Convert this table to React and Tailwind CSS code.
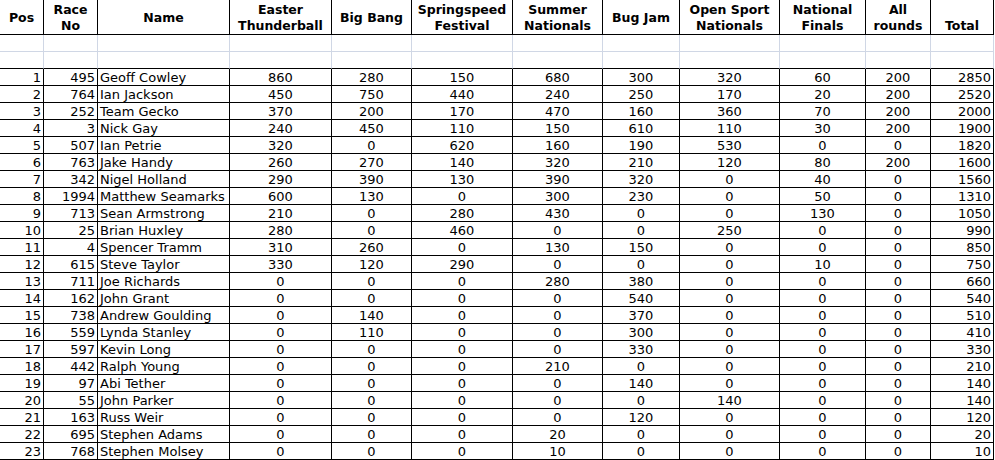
const COLS = 'grid-cols-[44px_54px_132px_102px_80px_101px_90px_77px_100px_86px_65px_63px]';

const HEADERS = [
  { lines: ['Pos'] },
  { lines: ['Race', 'No'] },
  { lines: ['Name'] },
  { lines: ['Easter', 'Thunderball'] },
  { lines: ['Big Bang'] },
  { lines: ['Springspeed', 'Festival'] },
  { lines: ['Summer', 'Nationals'] },
  { lines: ['Bug Jam'] },
  { lines: ['Open Sport', 'Nationals'] },
  { lines: ['National', 'Finals'] },
  { lines: ['All', 'rounds'] },
  { lines: ['Total'], bottom: true },
];

const ROWS = [
  [1, 495, 'Geoff Cowley', 860, 280, 150, 680, 300, 320, 60, 200, 2850],
  [2, 764, 'Ian Jackson', 450, 750, 440, 240, 250, 170, 20, 200, 2520],
  [3, 252, 'Team Gecko', 370, 200, 170, 470, 160, 360, 70, 200, 2000],
  [4, 3, 'Nick Gay', 240, 450, 110, 150, 610, 110, 30, 200, 1900],
  [5, 507, 'Ian Petrie', 320, 0, 620, 160, 190, 530, 0, 0, 1820],
  [6, 763, 'Jake Handy', 260, 270, 140, 320, 210, 120, 80, 200, 1600],
  [7, 342, 'Nigel Holland', 290, 390, 130, 390, 320, 0, 40, 0, 1560],
  [8, 1994, 'Matthew Seamarks', 600, 130, 0, 300, 230, 0, 50, 0, 1310],
  [9, 713, 'Sean Armstrong', 210, 0, 280, 430, 0, 0, 130, 0, 1050],
  [10, 25, 'Brian Huxley', 280, 0, 460, 0, 0, 250, 0, 0, 990],
  [11, 4, 'Spencer Tramm', 310, 260, 0, 130, 150, 0, 0, 0, 850],
  [12, 615, 'Steve Taylor', 330, 120, 290, 0, 0, 0, 10, 0, 750],
  [13, 711, 'Joe Richards', 0, 0, 0, 280, 380, 0, 0, 0, 660],
  [14, 162, 'John Grant', 0, 0, 0, 0, 540, 0, 0, 0, 540],
  [15, 738, 'Andrew Goulding', 0, 140, 0, 0, 370, 0, 0, 0, 510],
  [16, 559, 'Lynda Stanley', 0, 110, 0, 0, 300, 0, 0, 0, 410],
  [17, 597, 'Kevin Long', 0, 0, 0, 0, 330, 0, 0, 0, 330],
  [18, 442, 'Ralph Young', 0, 0, 0, 210, 0, 0, 0, 0, 210],
  [19, 97, 'Abi Tether', 0, 0, 0, 0, 140, 0, 0, 0, 140],
  [20, 55, 'John Parker', 0, 0, 0, 0, 0, 140, 0, 0, 140],
  [21, 163, 'Russ Weir', 0, 0, 0, 0, 120, 0, 0, 0, 120],
  [22, 695, 'Stephen Adams', 0, 0, 0, 20, 0, 0, 0, 0, 20],
  [23, 768, 'Stephen Molsey', 0, 0, 0, 10, 0, 0, 0, 0, 10],
];

function cellAlign(i) {
  if (i === 0 || i === 1 || i === 11) return 'text-right pr-[2px]';
  if (i === 2) return 'text-left pl-[2px]';
  return 'text-center';
}

export default function App() {
  return (
    <div className="w-[995px] h-[460px] bg-white overflow-hidden text-black font-['DejaVu_Sans',Verdana,sans-serif] text-[13px]">
      {/* header */}
      <div className={`grid ${COLS} h-[35px]`}>
        {HEADERS.map((h, i) => (
          <div
            key={i}
            className={`border-r border-b border-black flex flex-col items-center font-bold leading-[16px] text-[12.5px] ${h.bottom ? 'justify-end' : 'justify-center pt-[2px]'}`}
          >
            {h.lines.map((l) => (
              <span key={l} className="whitespace-nowrap">{l}</span>
            ))}
          </div>
        ))}
      </div>

      {/* blank spacer rows */}
      {[0, 1].map((r) => (
        <div key={r} className={`grid ${COLS} h-[17px]`}>
          {HEADERS.map((_, i) => (
            <div
              key={i}
              className={`border-r border-b ${r === 1 ? 'border-b-black' : 'border-b-[#d0d7e5]'} border-r-[#d0d7e5]`}
            />
          ))}
        </div>
      ))}

      {/* data */}
      {ROWS.map((row) => (
        <div key={row[0]} className={`grid ${COLS} h-[17px]`}>
          {row.map((v, i) => (
            <div
              key={i}
              className={`border-r border-b border-black leading-[18px] whitespace-nowrap overflow-hidden ${cellAlign(i)}`}
            >
              {v}
            </div>
          ))}
        </div>
      ))}
    </div>
  );
}
